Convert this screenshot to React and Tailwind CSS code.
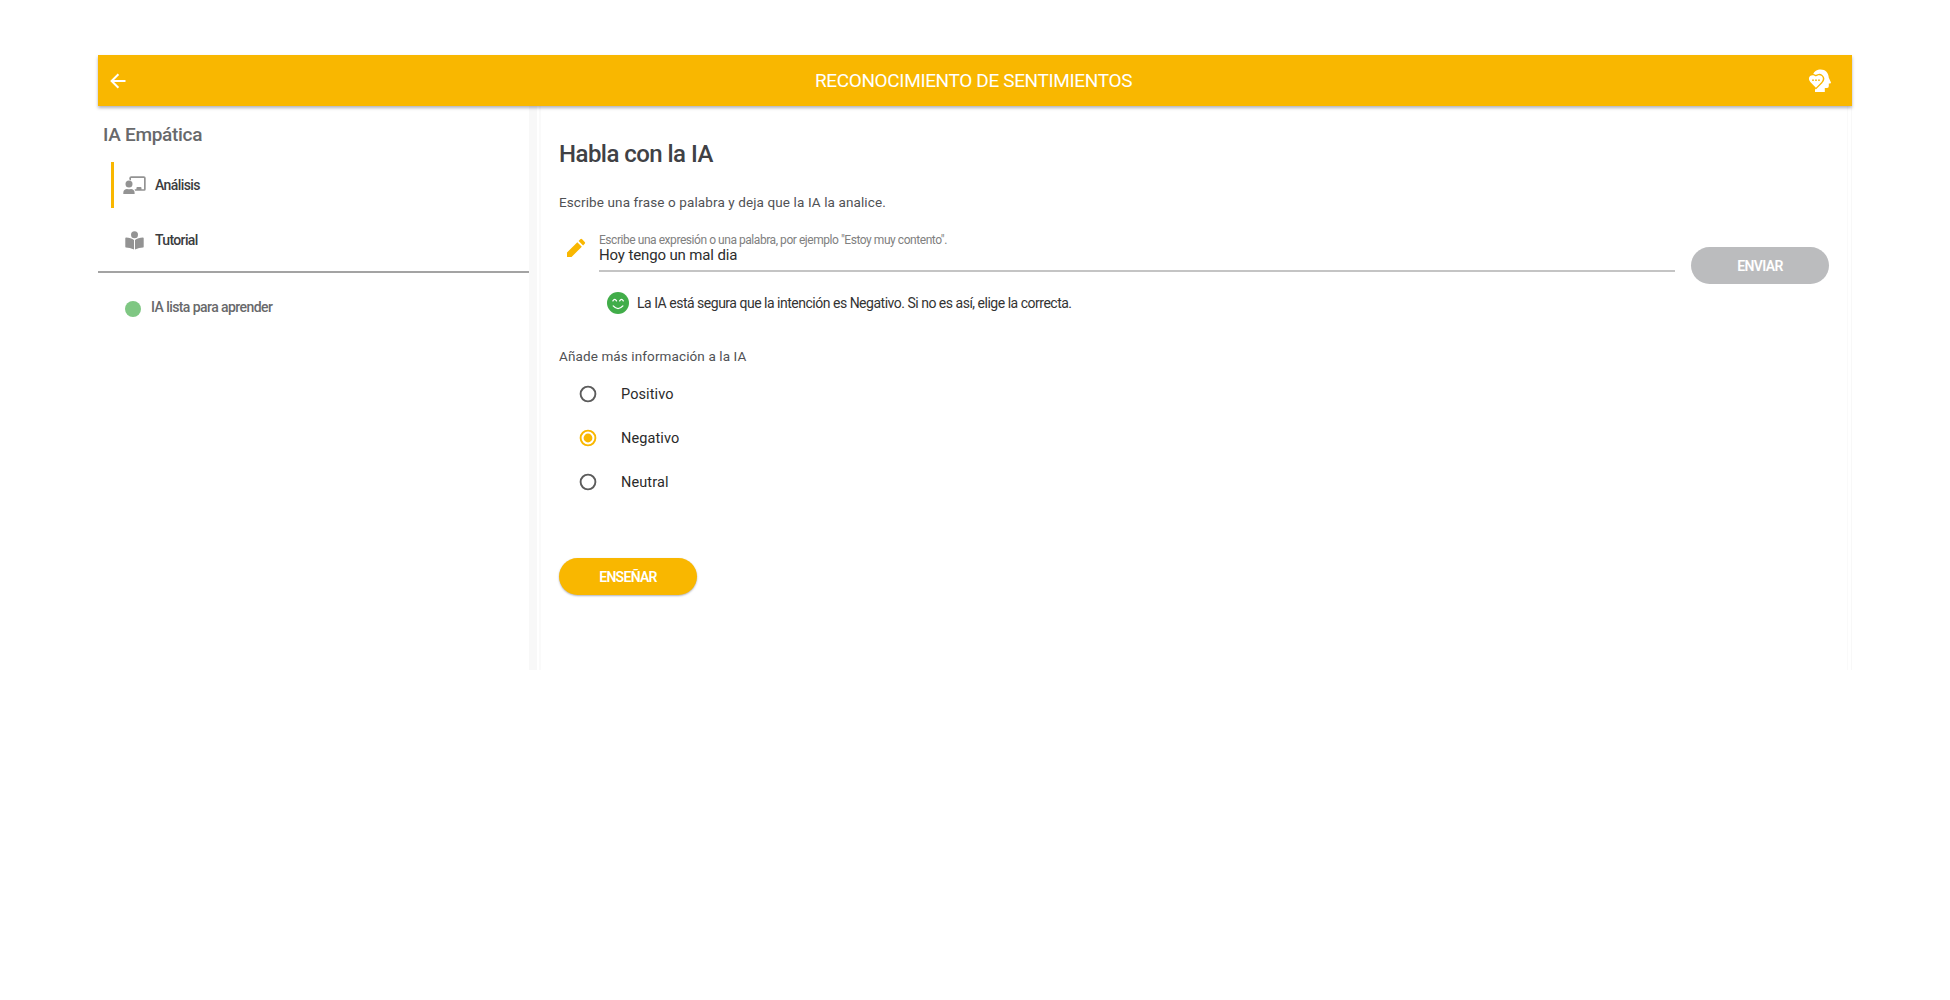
import React from "react";

function TeacherIcon() {
  return (
    <svg className="h-[19px] w-[23px] shrink-0" viewBox="0 0 23 19" fill="#939393">
      <path d="M6.300 3.600V2A1.900 1.900 0 0 1 8.200 .2H20.800A1.900 1.900 0 0 1 22.700 2.100V13.300A1.500 1.500 0 0 1 21.200 14.800H12.100L11.600 13.200H13.400V11.900A1 1 0 0 1 14.400 10.900H17.500A1 1 0 0 1 18.500 11.900V13.200H21V1.900H8V4.400Z" />
      <circle cx="6" cy="7.900" r="3.500" />
      <path d="M.3 18V16.700C.3 14.100 2.100 12.900 4 12.900C5.400 13.300 6.600 13.300 8 12.900C9.900 12.900 11.600 14.100 11.600 16.700V18Z" />
    </svg>
  );
}

function ReaderIcon() {
  return (
    <svg className="h-[19px] w-[19px] shrink-0" viewBox="0 0 19 19" fill="#939393">
      <circle cx="9.500" cy="3.700" r="3.500" />
      <path d="M9 9.100V18.500C6.300 17 3.400 16.500 .9 16.400Q.3 16.300 .3 15.700V7.300Q.3 6.500 1.100 6.500C4.100 6.700 7.100 7.500 9 9.100Z" />
      <path d="M10 9.100V18.500C12.700 17 15.600 16.500 18.100 16.400Q18.700 16.300 18.700 15.700V7.300Q18.700 6.500 17.900 6.500C14.900 6.700 11.900 7.500 10 9.100Z" />
    </svg>
  );
}

function EmpathyIcon() {
  return (
    <svg className="h-6 w-6" viewBox="0 0 24 24">
      <path fill="#fff" d="M5.200 5.500C6 2.300 9.200 .5 12.700 .5C17.500 .5 20.600 4 20.800 8.700L22.900 13.200Q23.200 14.300 22.200 14.500H20.800V17Q20.800 18.900 19.100 18.900H16.800V22.900H7V19.800L9 12Z" />
      <path fill="#fff" stroke="#f9b700" strokeWidth="2.600" paintOrder="stroke" d="M7.900 18.700L2.300 13C.5 11 .5 8.600 2.100 7.100C3.800 5.600 6.400 6 7.900 7.600C9.400 6 12 5.600 13.700 7.100C15.300 8.600 15.300 11 13.500 13Z" />
      <g fill="#f9b700"><circle cx="5" cy="11.200" r=".85" /><circle cx="8" cy="11.200" r=".85" /><circle cx="11" cy="11.200" r=".85" /></g>
    </svg>
  );
}

function SmileIcon() {
  return (
    <svg className="h-[22px] w-[22px] shrink-0" viewBox="0 0 22 22" fill="none" stroke="#fff" strokeWidth="1.300" strokeLinecap="round">
      <circle cx="11" cy="11" r="11" fill="#41ad49" stroke="none" />
      <path d="M5.900 8.900Q7.700 5.900 9.500 8.900M12.700 8.900Q14.500 5.900 16.300 8.900M6.200 13.900Q11 19.300 15.900 13.900" />
    </svg>
  );
}

function Option({ label, checked }) {
  return (
    <label className="flex h-[44px] items-center">
      <svg className="h-[18px] w-[18px]" viewBox="0 0 18 18" fill="none">
        <circle cx="9" cy="9" r="7.400" stroke={checked ? "#f9b700" : "#5c5c5c"} strokeWidth="1.900" />
        {checked && <circle cx="9" cy="9" r="4.400" fill="#f9b700" />}
      </svg>
      <span className="ml-[24px] mt-px text-[14.5px] leading-5 tracking-[0.1px] text-[#2a2a2a]">{label}</span>
    </label>
  );
}

export default function App() {
  return (
    <div className="h-[1000px] w-[1950px] overflow-hidden bg-white pl-[98px] pt-[55px] font-[Roboto,sans-serif]">
      <div className="flex h-[615px] w-[1754px] flex-col">
        <header className="relative z-10 grid h-[51px] shrink-0 grid-cols-[1fr_auto_1fr] items-center bg-[#f9b700] shadow-[0_2px_3px_rgba(60,64,90,0.4)]">
          <svg className="ml-[12px] h-4 w-4" viewBox="0 0 16 16" fill="none" stroke="#fff" strokeWidth="2">
            <path d="M15.500 8H2M8.400 1.200L1.600 8L8.400 14.800" />
          </svg>
          <h1 className="mr-[3px] mt-px whitespace-nowrap text-[19px] leading-6 tracking-[-0.36px] text-white">RECONOCIMIENTO DE SENTIMIENTOS</h1>
          <div className="mr-[20px] justify-self-end"><EmpathyIcon /></div>
        </header>
        <div className="flex min-h-0 flex-1">
          <aside className="w-[431px] shrink-0 pt-[17px]">
            <h2 className="ml-[5px] text-[19px] font-medium leading-6 tracking-[-0.3px] text-[#68696b]">IA Empática</h2>
            <nav className="mt-[15px] flex flex-col gap-[9px]">
              <a className="ml-[13px] flex h-[46px] items-center border-l-[3px] border-[#f9b700] pl-[9px]">
                <TeacherIcon />
                <span className="ml-[9px] text-[14px] font-medium leading-5 tracking-[-0.58px] text-[#3b3c40]">Análisis</span>
              </a>
              <a className="ml-[13px] flex h-[46px] items-center pl-[14px]">
                <ReaderIcon />
                <span className="ml-[11px] text-[14px] font-medium leading-5 tracking-[-0.65px] text-[#3b3c40]">Tutorial</span>
              </a>
            </nav>
            <div className="mt-[8px] border-t-2 border-[#a3a3a3]" />
            <div className="mt-[24px] flex items-center pl-[27px]">
              <span className="mt-[3px] h-4 w-4 rounded-full bg-[#7fc783]" />
              <span className="ml-[10px] text-[14px] font-medium leading-5 tracking-[-0.57px] text-[#68696b]">IA lista para aprender</span>
            </div>
          </aside>
          <div className="flex flex-1 bg-[#f8f8f8] pl-[8px]">
            <main className="flex-1 border-r border-[#f8f8f8] bg-white pl-[2px] pr-[3px]">
              <div className="h-full border-l-2 border-r border-[#fafafa] pl-[18px] pr-[18px] pt-[33px]">
                <h2 className="text-[24px] font-medium leading-[30px] tracking-[-0.54px] text-[#404145]">Habla con la IA</h2>
                <p className="mt-[23px] text-[13.500px] leading-5 tracking-[0.11px] text-[#505154]">Escribe una frase o palabra y deja que la IA la analice.</p>
                <div className="mt-[21px] flex h-[51px]">
                  <svg className="ml-[5px] mt-[3px] h-[24px] w-[24px] shrink-0" viewBox="0 0 24 24" fill="#f9b700">
                    <path d="M3 16.500V21h4.500L17.810 10.700l-4.500-4.500L3 16.500zM20.710 7.700a1.300 1.300 0 0 0 0-1.800l-2.600-2.600a1.300 1.300 0 0 0-1.800 0l-1.700 1.700 4.500 4.500 1.600-1.800z" />
                  </svg>
                  <div className="ml-[11px] h-[39px] w-[1076px] shrink-0 border-b-2 border-[#c4c4c4]">
                    <div className="text-[12px] leading-[14px] tracking-[-0.45px] text-[#808080]">Escribe una expresión o una palabra, por ejemplo "Estoy muy contento".</div>
                    <div className="text-[15px] leading-[16px] tracking-[-0.14px] text-[#2d2d2d]">Hoy tengo un mal dia</div>
                  </div>
                  <button className="ml-auto mt-[14px] h-[37px] w-[138px] rounded-full bg-[#bbbcbe] text-[14px] font-semibold leading-5 tracking-[-0.65px] text-white">ENVIAR</button>
                </div>
                <div className="mt-[8px] flex h-[22px] items-center pl-[48px]">
                  <SmileIcon />
                  <span className="ml-[8px] text-[14px] leading-5 tracking-[-0.49px] text-[#333]">La IA está segura que la intención es Negativo. Si no es así, elige la correcta.</span>
                </div>
                <p className="mt-[32px] text-[13.500px] leading-5 tracking-[0.11px] text-[#505154]">Añade más información a la IA</p>
                <div className="mt-[6px] pl-[20px]">
                  <Option label="Positivo" />
                  <Option label="Negativo" checked />
                  <Option label="Neutral" />
                </div>
                <button className="mt-[54px] h-[37px] w-[138px] rounded-full bg-[#f9b700] text-[14px] font-semibold leading-5 tracking-[-0.7px] text-white shadow-[0_1px_2px_rgba(60,64,90,0.4)]">ENSEÑAR</button>
              </div>
            </main>
          </div>
        </div>
      </div>
    </div>
  );
}
